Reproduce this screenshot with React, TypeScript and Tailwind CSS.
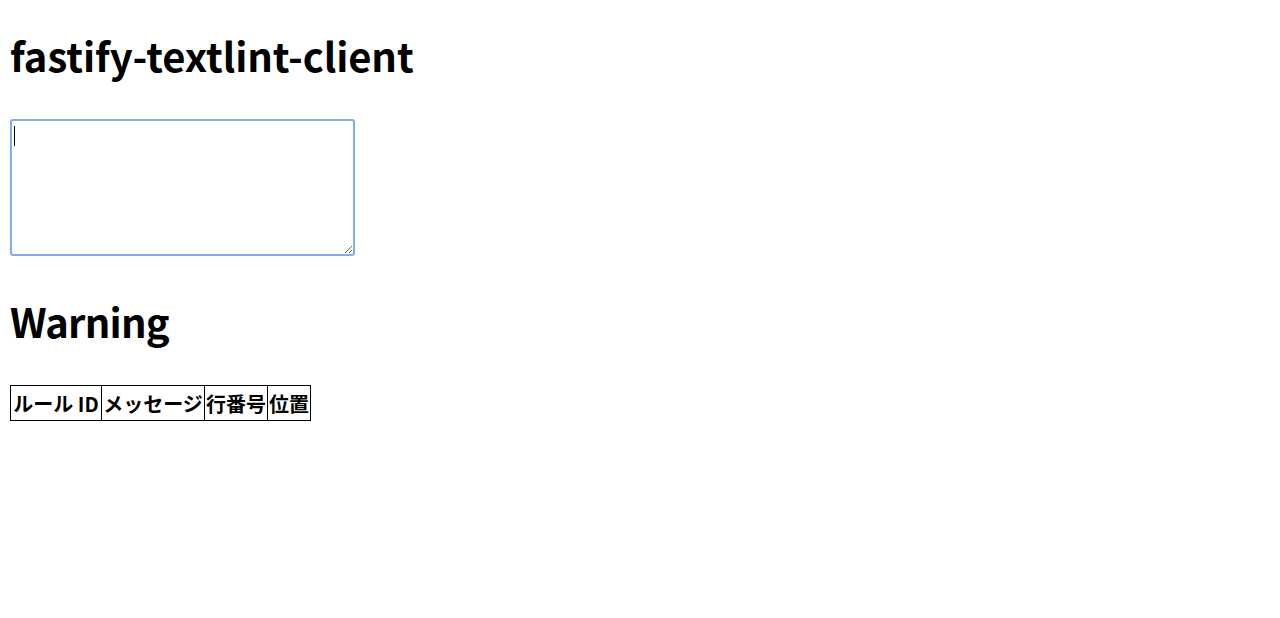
import React from "react";

export default function App() {
  const font = { fontFamily: '"Noto Sans CJK JP", "Noto Sans", sans-serif' };
  return (
    <div className="bg-white min-h-[618px] px-[10px] text-black" style={font}>
      <h1 className="pt-[23px] pb-[31px] text-[40px] font-bold leading-[65px] m-0 tracking-[-0.1px]">fastify-textlint-client</h1>
      <div className="relative h-[137px] w-[345px]">
        <textarea
          autoFocus
          className="block w-[345px] h-[137px] border-2 border-[#82abf0] rounded-[3px] outline-none bg-white p-[2px] text-[16px] resize"
        />
        <div className="absolute left-[4px] top-[7px] w-[1px] h-[20px] bg-black pointer-events-none" />
      </div>
      <h1 className="pt-[33px] pb-[31px] text-[40px] font-bold leading-[65px] m-0 tracking-[-0.8px]">Warning</h1>
      <table className="border-collapse border border-black text-[20px] font-bold">
        <thead>
          <tr className="h-[35px]">
            <th className="w-[91px] border border-black p-0 leading-[33px] font-bold whitespace-nowrap">ルール ID</th>
            <th className="w-[103px] border border-black p-0 leading-[33px] font-bold whitespace-nowrap">メッセージ</th>
            <th className="w-[63px] border border-black p-0 leading-[33px] font-bold whitespace-nowrap">行番号</th>
            <th className="w-[43px] border border-black p-0 leading-[33px] font-bold whitespace-nowrap">位置</th>
          </tr>
        </thead>
      </table>
    </div>
  );
}
